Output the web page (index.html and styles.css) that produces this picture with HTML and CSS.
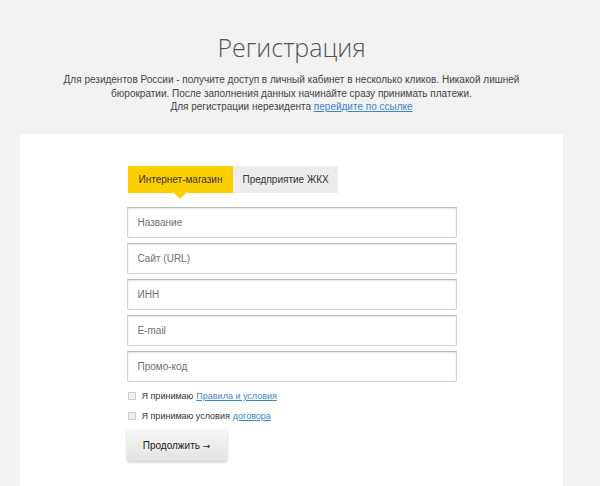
FILE: index.html
```html
<!DOCTYPE html>
<html lang="ru">
<head>
    <meta charset="UTF-8">
    <meta name="viewport" content="width=device-width, initial-scale=1.0">
    <title>Регистрация</title>
    <link rel="stylesheet" href="styles.css">
</head>
<body>

<div class="page">
    <section class="intro">
        <h1>Регистрация</h1>
        <p>
            Для резидентов России - получите доступ в личный кабинет в несколько кликов. Никакой лишней<br>
            бюрократии. После заполнения данных начинайте сразу принимать платежи.<br>
            Для регистрации нерезидента <a href="#">перейдите по ссылке</a>
        </p>
    </section>

    <section class="card">
        <form class="form">
            <div class="tabs">
                <span class="tab active">Интернет-магазин</span>
                <span class="tab">Предприятие ЖКХ</span>
            </div>

            <input type="text" class="field" placeholder="Название">
            <input type="text" class="field" placeholder="Сайт (URL)">
            <input type="text" class="field" placeholder="ИНН">
            <input type="text" class="field" placeholder="E-mail">
            <input type="text" class="field" placeholder="Промо-код">

            <label class="check"><span class="box"></span>Я принимаю <a href="#">Правила и условия</a></label>
            <label class="check"><span class="box"></span>Я принимаю условия <a href="#">договора</a></label>

            <button type="button" class="btn">Продолжить <span class="arrow">&rarr;</span></button>
        </form>
    </section>
</div>

</body>
</html>
```

FILE: styles.css
```css
body {
    margin: 0;
    padding: 0 17px 0 0;
    background-color: #f2f2f2;
    font-family: "Liberation Sans", Arial, sans-serif;
    color: #444;
}

.page {
    max-width: 543px;
    margin: 0 auto;
}

.intro {
    text-align: center;
    padding-top: 30px;
}

.intro h1 {
    margin: 0;
    font-family: "Open Sans", sans-serif;
    font-weight: 300;
    font-size: 25px;
    line-height: 34px;
    color: #555;
}

.intro p {
    margin: 9px -20px 0;
    font-size: 10px;
    line-height: 13.5px;
    color: #444;
}

a {
    color: #3a86d0;
    text-decoration: underline;
}

.card {
    margin-top: 20px;
    background-color: #fff;
    padding: 32px 0 30px;
}

.form {
    width: 330px;
    margin: 0 auto;
}

.tabs {
    display: flex;
    padding-left: 1px;
    margin-bottom: 14px;
}

.tab {
    position: relative;
    display: block;
    padding: 0 9px;
    height: 27px;
    line-height: 27px;
    font-size: 10px;
    color: #333;
    background-color: #ececec;
}

.tab.active {
    padding: 0 11px;
    background-color: #fccf00;
}

.tab.active::after {
    content: "";
    position: absolute;
    left: 50%;
    bottom: -6px;
    margin-left: -6px;
    border-left: 6px solid transparent;
    border-right: 6px solid transparent;
    border-top: 6px solid #fccf00;
}

.field {
    display: block;
    box-sizing: border-box;
    width: 100%;
    height: 31px;
    margin-bottom: 5px;
    padding: 0 10px;
    border: 1px solid #d3d3d3;
    border-top-color: #b8b8b8;
    box-shadow: inset 0 1px 2px rgba(0, 0, 0, 0.12);
    font-family: "Liberation Sans", Arial, sans-serif;
    font-size: 10px;
    color: #333;
    background-color: #fff;
}

.field::placeholder {
    color: #6f6f6f;
}

.check {
    display: flex;
    align-items: center;
    font-size: 9px;
    color: #333;
    margin-top: 9px;
    height: 11px;
}

.box {
    display: block;
    width: 6px;
    height: 6px;
    margin: 0 6px 0 1px;
    border: 1px solid #ccc;
    background-color: #eee;
}

.check a {
    margin-left: 3px;
}

.btn {
    margin-top: 8px;
    width: 100px;
    height: 31px;
    border: none;
    border-radius: 2px;
    background: linear-gradient(#f7f7f7, #e3e3e3);
    box-shadow: 0 1px 3px rgba(0, 0, 0, 0.25);
    font-family: "Liberation Sans", Arial, sans-serif;
    font-size: 10px;
    color: #222;
    cursor: pointer;
}

.arrow {
    font-family: "DejaVu Sans", sans-serif;
    font-size: 9px;
}
```
